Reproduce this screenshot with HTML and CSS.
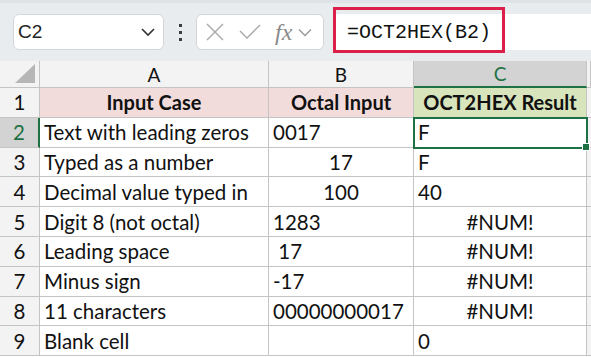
FILE: index.html
```html
<!DOCTYPE html>
<html lang="en">
<head>
    <meta charset="UTF-8">
    <title>OCT2HEX</title>
    <link rel="stylesheet" href="styles.css">
</head>
<body>
    <div class="toolbar">
        <div class="name-box">
            <span>C2</span>
            <svg class="chev" width="16" height="10" viewBox="0 0 16 10"><path d="M2 2 L8 8 L14 2" fill="none" stroke="#333" stroke-width="1.6"/></svg>
        </div>
        <div class="dots"><i></i><i></i><i></i></div>
        <div class="fx-box">
            <svg width="20" height="20" viewBox="0 0 20 20"><path d="M2 2 L18 18 M18 2 L2 18" stroke="#a8a8a8" stroke-width="1.4"/></svg>
            <svg width="22" height="16" viewBox="0 0 22 16"><path d="M1 7 L8 14 L21 1" fill="none" stroke="#a8a8a8" stroke-width="1.4"/></svg>
            <span class="fx">fx</span>
            <svg width="14" height="9" viewBox="0 0 14 9"><path d="M1 1.5 L7 7.5 L13 1.5" fill="none" stroke="#999" stroke-width="1.4"/></svg>
        </div>
        <div class="formula">
            <span>=OCT2HEX(B2)</span>
            <div class="highlight"></div>
        </div>
    </div>

    <div class="sheet">
        <div class="corner"><div class="tri"></div></div>
        <div class="col-head">A</div>
        <div class="col-head">B</div>
        <div class="col-head active">C</div>
        <div class="col-head edge"></div>

        <div class="row-head">1</div>
        <div class="cell title pink">Input Case</div>
        <div class="cell title pink">Octal Input</div>
        <div class="cell title green">OCT2HEX Result</div>
        <div class="cell edge"></div>

        <div class="row-head active">2</div>
        <div class="cell">Text with leading zeros</div>
        <div class="cell">0017</div>
        <div class="cell selected">F<span class="handle"></span></div>
        <div class="cell edge"></div>

        <div class="row-head">3</div>
        <div class="cell">Typed as a number</div>
        <div class="cell center">17</div>
        <div class="cell">F</div>
        <div class="cell edge"></div>

        <div class="row-head">4</div>
        <div class="cell">Decimal value typed in</div>
        <div class="cell center">100</div>
        <div class="cell">40</div>
        <div class="cell edge"></div>

        <div class="row-head">5</div>
        <div class="cell">Digit 8 (not octal)</div>
        <div class="cell">1283</div>
        <div class="cell center">#NUM!</div>
        <div class="cell edge"></div>

        <div class="row-head">6</div>
        <div class="cell">Leading space</div>
        <div class="cell">&nbsp;17</div>
        <div class="cell center">#NUM!</div>
        <div class="cell edge"></div>

        <div class="row-head">7</div>
        <div class="cell">Minus sign</div>
        <div class="cell">-17</div>
        <div class="cell center">#NUM!</div>
        <div class="cell edge"></div>

        <div class="row-head">8</div>
        <div class="cell">11 characters</div>
        <div class="cell">00000000017</div>
        <div class="cell center">#NUM!</div>
        <div class="cell edge"></div>

        <div class="row-head">9</div>
        <div class="cell">Blank cell</div>
        <div class="cell"></div>
        <div class="cell">0</div>
        <div class="cell edge"></div>
    </div>
</body>
</html>
```

FILE: styles.css
```css
body {
    margin: 0;
    width: 591px;
    height: 357px;
    overflow: hidden;
    background: #fff;
    font-family: Lato, "Open Sans", sans-serif;
}

/* formula bar */
.toolbar {
    height: 61px;
    box-sizing: border-box;
    display: flex;
    align-items: center;
    padding-left: 13px;
    background: #e9ecef;
    border-top: 3px solid #dfe2e6;
}
.name-box {
    width: 151px;
    height: 36px;
    box-sizing: border-box;
    display: flex;
    align-items: center;
    justify-content: space-between;
    padding: 0 7px 0 4px;
    background: #fff;
    border: 1px solid #d3d6da;
    border-radius: 6px;
    font-family: "Liberation Sans", Arial, sans-serif;
    font-size: 19px;
    color: #222;
}
.dots {
    width: 32px;
    display: flex;
    flex-direction: column;
    align-items: center;
    gap: 4px;
}
.dots i {
    width: 3px;
    height: 3px;
    background: #3a3d40;
}
.fx-box {
    width: 128px;
    height: 36px;
    box-sizing: border-box;
    display: flex;
    align-items: center;
    gap: 14px;
    padding-left: 8px;
    background: #fff;
    border: 1px solid #d3d6da;
    border-radius: 6px;
}
.fx-box .fx {
    font-family: "Liberation Serif", serif;
    font-style: italic;
    font-size: 24px;
    color: #8a8a8a;
    margin-right: -8px;
}
.formula {
    position: relative;
    flex: 1;
    height: 36px;
    margin-left: 9px;
    display: flex;
    align-items: center;
    padding-left: 14px;
    background: #fff;
    border-radius: 6px 0 0 6px;
    font-family: "Liberation Mono", monospace;
    font-size: 20px;
    color: #111;
}
.highlight {
    position: absolute;
    left: 0;
    top: -7px;
    width: 172px;
    height: 46px;
    box-sizing: border-box;
    border: 3px solid #dc1e4b;
}

/* grid */
.sheet {
    display: grid;
    grid-template-columns: 40px 229px 145px 173px 4px;
    grid-template-rows: 27px repeat(9, 29.8px);
    font-size: 20.5px;
    color: #111;
}
.sheet > div {
    box-sizing: border-box;
    border-right: 1px solid #c4c4c4;
    border-bottom: 1px solid #c4c4c4;
    display: flex;
    align-items: center;
    white-space: nowrap;
}
.corner {
    background: #f3f3f3;
    position: relative;
}
.tri {
    position: absolute;
    right: 4px;
    bottom: 4px;
    width: 0;
    height: 0;
    border-left: 20px solid transparent;
    border-bottom: 19px solid #b6b6b6;
}
.col-head {
    justify-content: center;
    background: #f3f3f3;
    font-size: 19px;
}
.col-head.active {
    background: #d3d3d3;
    color: #1e7145;
    border-bottom: 2px solid #1e7145 !important;
}
.row-head {
    justify-content: center;
    background: #f3f3f3;
}
.row-head.active {
    background: #d3d3d3;
    color: #1e7145;
    border-right: 2px solid #1e7145 !important;
}
.cell {
    padding-left: 4px;
}
.cell.center {
    justify-content: center;
    padding-left: 0;
}
.cell.title {
    justify-content: center;
    font-weight: bold;
    font-size: 20px;
    padding-left: 0;
}
.pink {
    background: #f2dcdb;
}
.green {
    background: #d8e4bc;
}
.cell.edge {
    background: #f3f3f3;
    border-right: none;
}
.selected {
    position: relative;
    outline: 2px solid #1e7145;
    outline-offset: -1px;
}
.handle {
    position: absolute;
    right: -4px;
    bottom: -4px;
    width: 6px;
    height: 6px;
    background: #1e7145;
    border: 1px solid #fff;
}
```
